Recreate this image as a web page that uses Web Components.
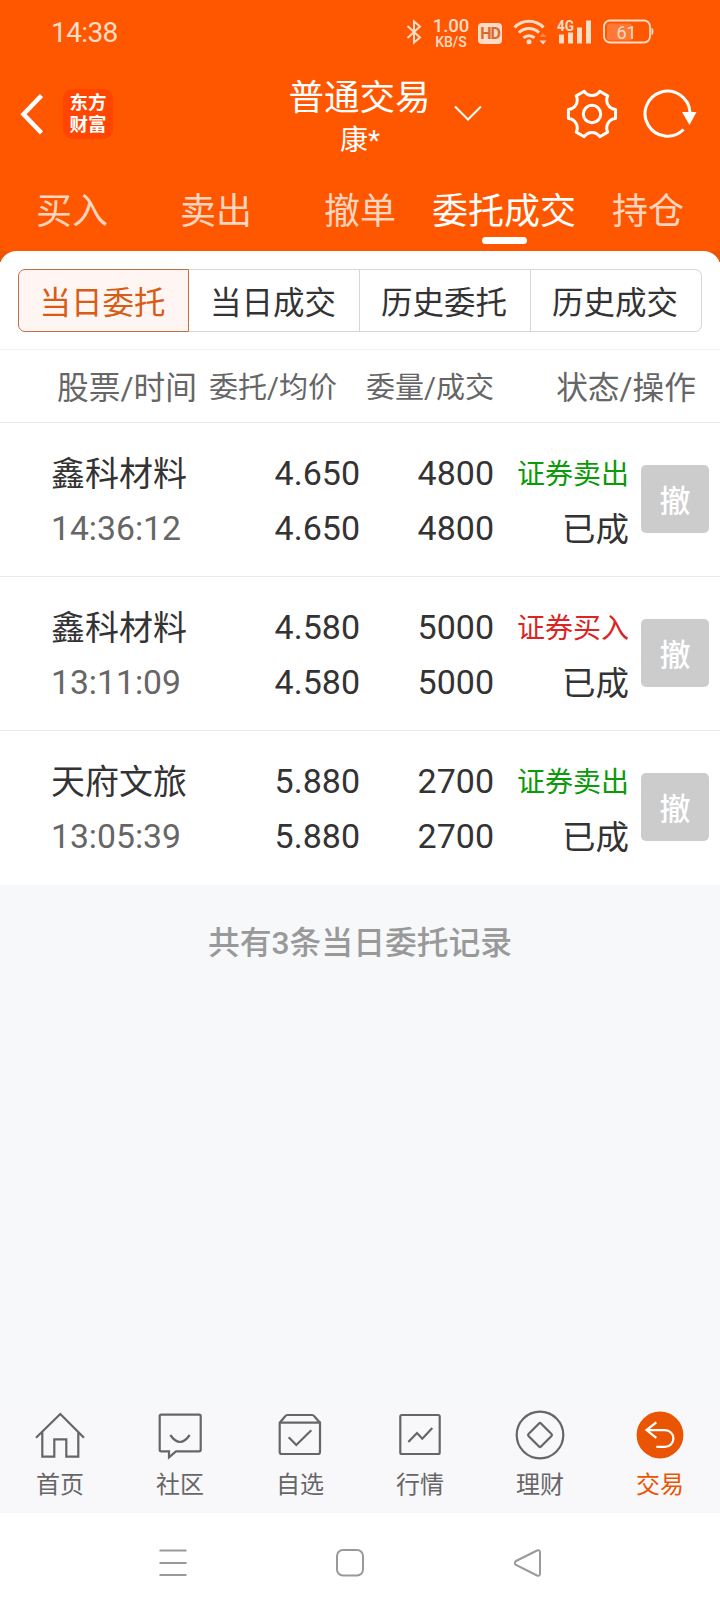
<!DOCTYPE html>
<html lang="zh-CN">
<head>
<meta charset="utf-8">
<meta name="viewport" content="width=device-width, initial-scale=1">
<title>普通交易</title>
<style>
    body {
        margin: 0;
        font-family: Roboto, "Noto Sans CJK SC", sans-serif;
        color: #333;
        background: #f7f8fa;
    }
</style>
</head>
<body>
<trade-app>
    <status-bar slot="top" time="14:38"></status-bar>
    <title-bar slot="top">
        普通交易
        <span slot="account">康*</span>
    </title-bar>
    <trade-tabs slot="top">
        <trade-tab>买入</trade-tab>
        <trade-tab>卖出</trade-tab>
        <trade-tab>撤单</trade-tab>
        <trade-tab active>委托成交</trade-tab>
        <trade-tab>持仓</trade-tab>
    </trade-tabs>

    <segment-control>
        <segment-item active>当日委托</segment-item>
        <segment-item>当日成交</segment-item>
        <segment-item>历史委托</segment-item>
        <segment-item>历史成交</segment-item>
    </segment-control>
    <order-head></order-head>
    <order-row name="鑫科材料" time="14:36:12" price="4.650" average="4.650" amount="4800" filled="4800" side="sell" label="证券卖出"></order-row>
    <order-row name="鑫科材料" time="13:11:09" price="4.580" average="4.580" amount="5000" filled="5000" side="buy" label="证券买入"></order-row>
    <order-row name="天府文旅" time="13:05:39" price="5.880" average="5.880" amount="2700" filled="2700" side="sell" label="证券卖出"></order-row>

    <span slot="summary">共有3条当日委托记录</span>

    <bottom-nav slot="bottom">
        <nav-item icon="home">首页</nav-item>
        <nav-item icon="chat">社区</nav-item>
        <nav-item icon="box">自选</nav-item>
        <nav-item icon="chart">行情</nav-item>
        <nav-item icon="finance">理财</nav-item>
        <nav-item icon="trade" active>交易</nav-item>
    </bottom-nav>
    <system-nav slot="bottom"></system-nav>
</trade-app>

<script>
class BaseElement extends HTMLElement {
    constructor() {
        super();
        this.attachShadow({ mode: 'open' });
    }

    connectedCallback() {
        const template = document.createElement('template');
        template.innerHTML = `${this.getStyles()}${this.getTemplate()}`;
        this.shadowRoot.appendChild(template.content.cloneNode(true));
    }
}

class TradeApp extends BaseElement {
    getTemplate() {
        return `
            <header><slot name="top"></slot></header>
            <div class="backing"><main><slot></slot></main></div>
            <p><slot name="summary"></slot></p>
            <footer><slot name="bottom"></slot></footer>
        `;
    }

    getStyles() {
        return `
        <style>
        :host {
            display: flex;
            flex-direction: column;
            height: 1612px;
            overflow: hidden;
        }
        header {
            height: 251px;
            background: #ff5700;
        }
        .backing {
            background: linear-gradient(#ea5504 11px, #fff 11px);
        }
        main {
            display: block;
            background: #fff;
            border-radius: 17px 17px 0 0 / 15px 15px 0 0;
        }
        p {
            flex: 1;
            margin: 0;
            padding-top: 36px;
            font-size: 31.800px;
            font-weight: 500;
            line-height: 44px;
            text-align: center;
            color: #999;
        }
        </style>
        `;
    }
}

class StatusBar extends BaseElement {
    getTemplate() {
        return `
            <time>${this.getAttribute('time')}</time>
            <div class="icons">
                <svg width="18" height="28" viewBox="0 0 18 28">
                    <path d="M2.500 8 15 19.500 9 24.500V3.500L15 8.500 2.500 20" fill="none" stroke="currentColor" stroke-width="2"/>
                </svg>
                <div class="speed"><b>1.00</b><span>KB/S</span></div>
                <div class="hd">HD</div>
                <svg class="wifi" width="34" height="28" viewBox="0 0 34 28">
                    <g fill="none" stroke="currentColor" stroke-width="3">
                        <path d="M1.500 9.500a20 20 0 0 1 29 0"/>
                        <path d="M6 14.700a14 14 0 0 1 20 0"/>
                        <path d="M10.500 19.900a8 8 0 0 1 11 0"/>
                    </g>
                    <circle cx="16" cy="23.700" r="2.500" fill="currentColor"/>
                    <path d="M26.500 19l3.500-4 3.500 4z" fill="currentColor" opacity=".35"/>
                    <path d="M26.500 22.500l3.500 4 3.500-4z" fill="currentColor"/>
                </svg>
                <svg class="signal" width="36" height="28" viewBox="0 0 36 28" fill="currentColor">
                    <text x="0" y="12.500" font-size="15" font-weight="700" textLength="17" lengthAdjust="spacingAndGlyphs">4G</text>
                    <path d="M2 16.500h5v9H2zM11 14.500h5v11h-5zM20 9.500h5v16h-5zM29 2.500h5v23h-5z"/>
                </svg>
                <svg class="battery" width="52" height="28" viewBox="0 0 52 28">
                    <rect x="4" y="5.500" width="25" height="17" rx="3" fill="#ff7834"/>
                    <rect x="1" y="2.500" width="46" height="22" rx="6" fill="none" stroke="currentColor" stroke-width="1.800"/>
                    <path d="M48.500 9.500q2 1 2 4t-2 4z" fill="currentColor"/>
                    <text x="23.500" y="20.500" font-size="18" text-anchor="middle" fill="currentColor">61</text>
                </svg>
            </div>
        `;
    }

    getStyles() {
        return `
        <style>
        :host {
            display: flex;
            justify-content: space-between;
            align-items: center;
            height: 65px;
            padding: 0 65px 1px 51px;
            color: #ffdcc8;
            box-sizing: border-box;
        }
        time {
            font-size: 28px;
            letter-spacing: -.600px;
            padding-top: 1px;
        }
        .icons {
            display: flex;
            align-items: center;
        }
        .speed {
            display: grid;
            width: 38px;
            margin: 3px 8px 0 9px;
            text-align: center;
        }
        .speed b {
            font-size: 18.500px;
            line-height: 15px;
            font-weight: 500;
        }
        .speed span {
            font-size: 14px;
            line-height: 14px;
            font-weight: 500;
            padding-top: 1px;
        }
        .hd {
            width: 24px;
            height: 21px;
            margin-top: 3px;
            border-radius: 4px;
            background: #ffdcc8;
            color: #d96a2c;
            font-size: 16px;
            line-height: 22px;
            font-weight: 700;
            letter-spacing: -1px;
            text-align: center;
        }
        .wifi { margin-left: 11px; }
        .signal { margin-left: 10px; }
        .battery { margin-left: 10px; }
        </style>
        `;
    }
}

class TitleBar extends BaseElement {
    // six-tooth cog around the origin
    getGear() {
        const at = (radius, degrees) => {
            const a = degrees * Math.PI / 180;
            return `${(radius * Math.cos(a)).toFixed(2)} ${(radius * Math.sin(a)).toFixed(2)}`;
        };
        let d = '';
        for (let i = 0; i < 6; i++) {
            const a = i * 60;
            d += `${i ? 'L' : 'M'}${at(24, a - 11)}L${at(24, a + 11)}C${at(17.5, a + 17)} ${at(17.5, a + 43)} ${at(24, a + 49)}`;
        }
        return d + 'Z';
    }

    getTemplate() {
        return `
            <div class="side">
                <svg width="24" height="44" viewBox="0 0 24 44"><path d="M22.500 3.500 4.500 22.200 22.500 41" fill="none" stroke="#fff" stroke-width="4.500"/></svg>
                <div class="logo">东方<br>财富</div>
            </div>
            <div class="title">
                <h1><slot></slot></h1>
                <slot name="account"></slot>
            </div>
            <div class="side right">
                <svg class="down" width="30" height="18" viewBox="0 0 30 18"><path d="M2 2.500 15 15.500 28 2.500" fill="none" stroke="#fff" stroke-width="2"/></svg>
                <svg width="54" height="54" viewBox="-27 -27 54 54" fill="none" stroke="#fff" stroke-width="3" stroke-linejoin="round">
                    <path d="${this.getGear()}"/>
                    <circle r="8.700"/>
                </svg>
                <svg class="refresh" width="56" height="54" viewBox="0 0 56 54">
                    <path d="M49 25A22.500 22.500 0 1 0 42.500 42.500" fill="none" stroke="#fff" stroke-width="3"/>
                    <path d="M41 25h14.500l-7 13z" fill="#fff"/>
                </svg>
            </div>
        `;
    }

    getStyles() {
        return `
        <style>
        :host {
            display: grid;
            grid-template-columns: 1fr 144px 1fr;
            height: 99px;
            align-items: center;
            color: #fff;
        }
        svg { flex: none; }
        .side {
            display: flex;
            align-items: center;
            padding: 0 0 1px 19px;
        }
        .right {
            justify-content: flex-end;
            padding: 0 23px 1px 0;
        }
        .logo {
            width: 50px;
            height: 50px;
            margin-left: 20px;
            padding-top: 3px;
            box-sizing: border-box;
            border-radius: 9px;
            background: #ff4500;
            font-size: 18.500px;
            line-height: 22px;
            font-weight: 700;
            text-align: center;
        }
        .title {
            text-align: center;
            font-size: 28px;
            line-height: 38px;
            padding-top: 5px;
        }
        h1 {
            margin: 0 0 0 -1px;
            font-size: 35.500px;
            line-height: 48px;
            font-weight: 400;
            white-space: nowrap;
        }
        .down { margin: 0 82px 2px 0; }
        .refresh { margin-left: 22px; }
        </style>
        `;
    }
}

class TradeTabs extends BaseElement {
    getTemplate() {
        return `<slot></slot>`;
    }

    getStyles() {
        return `
        <style>
        :host {
            display: grid;
            grid-template-columns: repeat(5, 1fr);
            padding-top: 23px;
        }
        </style>
        `;
    }
}

class TradeTab extends BaseElement {
    getTemplate() {
        return `<slot></slot><i></i>`;
    }

    getStyles() {
        return `
        <style>
        :host {
            display: flex;
            flex-direction: column;
            align-items: center;
            font-size: 36px;
            line-height: 50px;
            color: #ffd5bf;
        }
        :host([active]) { color: #fff; }
        i {
            display: none;
            width: 45px;
            height: 7px;
            border-radius: 4px;
            background: #fff;
        }
        :host([active]) i { display: block; }
        </style>
        `;
    }
}

class SegmentControl extends BaseElement {
    getTemplate() {
        return `<slot></slot>`;
    }

    getStyles() {
        return `
        <style>
        :host {
            display: grid;
            grid-template-columns: repeat(4, 1fr);
            padding: 18px 18px 17px;
        }
        </style>
        `;
    }
}

class SegmentItem extends BaseElement {
    getTemplate() {
        return `<slot></slot>`;
    }

    getStyles() {
        return `
        <style>
        :host {
            height: 63px;
            box-sizing: border-box;
            border: 1px solid #d6d7d9;
            border-left-width: 0;
            padding-right: 2px;
            font-size: 31.500px;
            line-height: 67px;
            text-align: center;
        }
        :host(:first-child) {
            border-left-width: 1px;
            border-radius: 7px 0 0 7px;
        }
        :host(:last-child) { border-radius: 0 7px 7px 0; }
        :host([active]) {
            border-color: #c2703f;
            background: #fff6f3;
            color: #d75c16;
        }
        </style>
        `;
    }
}

class OrderHead extends BaseElement {
    getTemplate() {
        return `
            <span class="big first">股票/时间</span>
            <span>委托/均价</span>
            <span>委量/成交</span>
            <span class="big">状态/操作</span>
        `;
    }

    getStyles() {
        return `
        <style>
        :host {
            display: grid;
            grid-template-columns: 145px 135px 157px 202px;
            height: 74px;
            box-sizing: border-box;
            padding-left: 57px;
            border-top: 1px solid #f3f3f3;
            border-bottom: 1px solid #e8e8e8;
            font-size: 29px;
            line-height: 77px;
            text-align: right;
            white-space: nowrap;
            color: #666;
        }
        .big { font-size: 31.700px; }
        .first { text-align: left; }
        </style>
        `;
    }
}

class OrderRow extends BaseElement {
    getTemplate() {
        const get = (key) => this.getAttribute(key);
        return `
            <div class="stock"><div class="name">${get('name')}</div><div class="time">${get('time')}</div></div>
            <div class="figures"><div>${get('price')}</div><div>${get('average')}</div></div>
            <div class="figures"><div>${get('amount')}</div><div>${get('filled')}</div></div>
            <div><div class="side ${get('side')}">${get('label')}</div><div class="state">已成</div></div>
            <button>撤</button>
        `;
    }

    getStyles() {
        return `
        <style>
        :host {
            display: grid;
            grid-template-columns: 159px 150px 134px 135px 68px;
            align-items: center;
            height: 154px;
            box-sizing: border-box;
            padding-left: 51px;
            border-bottom: 1px solid #ebebeb;
            font-size: 34px;
            line-height: 55px;
            text-align: right;
            white-space: nowrap;
        }
        :host(:last-of-type) { border-bottom-color: #fff; }
        .stock { text-align: left; }
        .name, .side, .state {
            height: 53px;
            padding-top: 2px;
        }
        .figures { padding-top: 2px; }
        .time {
            height: 54px;
            padding-top: 1px;
            color: #666;
            font-size: 33.700px;
        }
        .side { font-size: 28px; }
        .sell { color: #0a9a0a; }
        .buy { color: #d92525; }
        .state { font-size: 33.500px; }
        button {
            width: 68px;
            height: 68px;
            margin: 0 0 2px 12px;
            padding: 0;
            border: 0;
            border-radius: 5px;
            background: #ccc;
            color: #fff;
            font: 500 31px "Noto Sans CJK SC", sans-serif;
        }
        </style>
        `;
    }
}

class BottomNav extends BaseElement {
    getTemplate() {
        return `<slot></slot>`;
    }

    getStyles() {
        return `
        <style>
        :host {
            display: grid;
            grid-template-columns: repeat(6, 1fr);
            height: 104px;
            background: #f8f8fa;
        }
        </style>
        `;
    }
}

const icons = {
    home: `<path d="M2 28.700 26.300 5 50 28.700M8.300 23v24.700h12V30.300h12v17.400h12V23"/>`,
    chat: `<path d="M7.200 5.700h38q1.500 0 1.500 1.500v33.600q0 1.500-1.500 1.500H22l-7 6v-6H7.200q-1.500 0-1.500-1.500V7.200q0-1.500 1.500-1.500z"/><path d="M16.300 26q9.700 14 19.400 0"/>`,
    box: `<path d="M5.700 13.700H46V43q0 2-2 2H7.700q-2 0-2-2V13.700L11 7.500Q12 6 13.500 6H38q1.500 0 2.500 1.500l5.500 6.200"/><path d="M14.700 28.300l7.600 7.700 15-14.700"/>`,
    chart: `<rect x="6.300" y="6" width="39.400" height="39" rx="1.500"/><path d="M14.300 33l8.700-9 5.300 5.700 10-10.700"/>`,
    finance: `<circle cx="26" cy="26" r="23.300"/><path d="M25 14.500q1-1 2 0L37.500 25q1 1 0 2L27 37.500q-1 1-2 0L14.500 27q-1-1 0-2z"/>`,
    trade: `<circle cx="26" cy="26" r="22.300" fill="#ea5504" stroke="#ea5504"/><path d="M22.300 13.300 12.500 21.100l9.800 7.700M12.500 21.100H31a8.400 8.400 0 0 1 0 16.800h-8.700" stroke="#fff"/>`
};

class NavItem extends BaseElement {
    getTemplate() {
        return `
            <svg width="52" height="52" viewBox="0 0 52 52" fill="none" stroke="#666" stroke-width="2.200">${icons[this.getAttribute('icon')]}</svg>
            <slot></slot>
        `;
    }

    getStyles() {
        return `
        <style>
        :host {
            display: flex;
            flex-direction: column;
            align-items: center;
            font-size: 24px;
            line-height: 48px;
            color: #666;
        }
        :host([active]) { color: #ea5504; }
        </style>
        `;
    }
}

class SystemNav extends BaseElement {
    getTemplate() {
        return `
            <svg width="28" height="28" viewBox="0 0 28 28"><path d="M.500 1.500h27M.500 14h27M.500 26h27"/></svg>
            <svg width="28" height="28" viewBox="0 0 28 28"><rect x="1" y="1" width="26" height="25.500" rx="6"/></svg>
            <svg width="28" height="28" viewBox="0 0 28 28"><path d="M2 12 23 1.500q3-1 3 2v21q0 3-3 2L2 16q-2.500-2 0-4z"/></svg>
        `;
    }

    getStyles() {
        return `
        <style>
        :host {
            display: flex;
            justify-content: center;
            gap: 149.500px;
            height: 99px;
            box-sizing: border-box;
            padding: 35.500px 20px 0 0;
            background: #fff;
        }
        svg {
            fill: none;
            stroke: #999;
            stroke-width: 2;
        }
        </style>
        `;
    }
}

customElements.define('trade-app', TradeApp);
customElements.define('status-bar', StatusBar);
customElements.define('title-bar', TitleBar);
customElements.define('trade-tabs', TradeTabs);
customElements.define('trade-tab', TradeTab);
customElements.define('segment-control', SegmentControl);
customElements.define('segment-item', SegmentItem);
customElements.define('order-head', OrderHead);
customElements.define('order-row', OrderRow);
customElements.define('bottom-nav', BottomNav);
customElements.define('nav-item', NavItem);
customElements.define('system-nav', SystemNav);
</script>
</body>
</html>
